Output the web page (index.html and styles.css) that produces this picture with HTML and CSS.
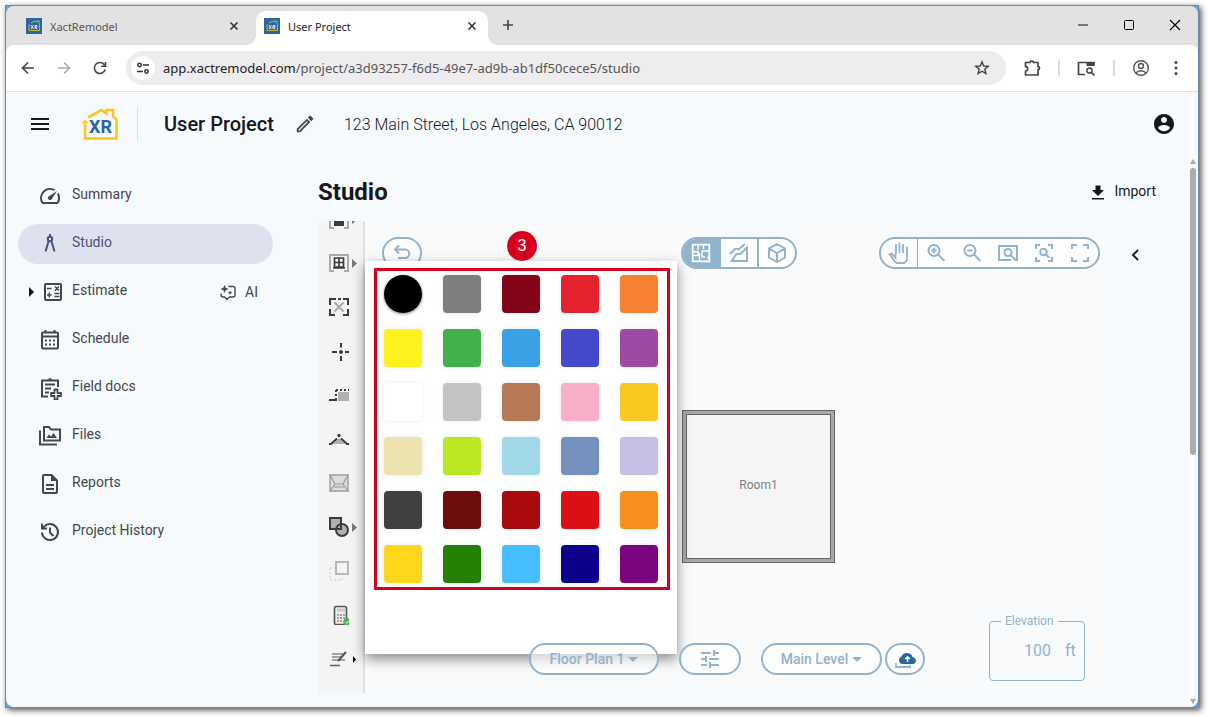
FILE: index.html
```
<!DOCTYPE html>
<html lang="en">

<head>
    <meta charset="UTF-8">
    <meta name="viewport" content="width=device-width, initial-scale=1.0">
    <title>User Project</title>
    <link rel="stylesheet" href="styles.css">
</head>

<body>
    <div class="window">
        <div class="chrome">
            <div class="tabs">
                <div class="tab">
                    <svg class="favicon" viewBox="0 0 16 16"><rect width="16" height="16" fill="#2a66a3"/><path d="M3 12.500V7.500M2.500 7H4M5 5l4-2 2 1V3h2v3l.5.5v6H3" fill="none" stroke="#c9b437"/><path d="M5 7l2.500 4M7.500 7L5 11M9 11V7.500h2v1.800H9l2.200 1.700" fill="none" stroke="#dfe9f3"/></svg>
                    <span class="tab-title">XactRemodel</span>
                    <button class="tab-close" aria-label="Close tab"><svg width="10" height="10" viewBox="0 0 10 10"><path d="M1.500 1.500l7 7M8.500 1.500l-7 7" stroke="currentColor" stroke-width="1.600"/></svg></button>
                </div>
                <div class="tab active">
                    <svg class="favicon" viewBox="0 0 16 16"><rect width="16" height="16" fill="#2a66a3"/><path d="M3 12.500V7.500M2.500 7H4M5 5l4-2 2 1V3h2v3l.5.5v6H3" fill="none" stroke="#c9b437"/><path d="M5 7l2.500 4M7.500 7L5 11M9 11V7.500h2v1.800H9l2.200 1.700" fill="none" stroke="#dfe9f3"/></svg>
                    <span class="tab-title">User Project</span>
                    <button class="tab-close" aria-label="Close tab"><svg width="10" height="10" viewBox="0 0 10 10"><path d="M1.500 1.500l7 7M8.500 1.500l-7 7" stroke="currentColor" stroke-width="1.600"/></svg></button>
                </div>
                <button class="new-tab" aria-label="New tab"><svg width="12" height="12" viewBox="0 0 12 12"><path d="M6 1v10M1 6h10" stroke="#444" stroke-width="1.600"/></svg></button>
                <div class="win-btns">
                    <button aria-label="Minimize"><svg width="12" height="12" viewBox="0 0 12 12"><path d="M1 6h10" stroke="#777" stroke-width="2"/></svg></button>
                    <button aria-label="Maximize"><svg width="12" height="12" viewBox="0 0 12 12"><rect x="1.500" y="1.500" width="9" height="9" rx="1" fill="none" stroke="#000"/></svg></button>
                    <button aria-label="Close"><svg width="12" height="12" viewBox="0 0 12 12"><path d="M1 1l10 10M11 1L1 11" stroke="#000" stroke-width="1.200"/></svg></button>
                </div>
            </div>
            <div class="toolbar">
                <button class="nav-btn" aria-label="Back"><svg width="16" height="16" viewBox="0 0 16 16"><path d="M14 8H3M8 2.500L2.500 8 8 13.500" fill="none" stroke="#444" stroke-width="1.600"/></svg></button>
                <button class="nav-btn" aria-label="Forward"><svg width="16" height="16" viewBox="0 0 16 16"><path d="M2 8h11M8 2.500L13.500 8 8 13.500" fill="none" stroke="#aaa" stroke-width="1.600"/></svg></button>
                <button class="nav-btn" aria-label="Reload"><svg width="16" height="16" viewBox="0 0 16 16"><path d="M13.200 9.500A5.500 5.500 0 1 1 12.500 5M13.500 2v4.200H9.300" fill="none" stroke="#444" stroke-width="1.600"/></svg></button>
                <div class="omnibox">
                    <button class="site-info" aria-label="Site information"><svg width="14" height="14" viewBox="0 0 14 14" fill="none" stroke="#333" stroke-width="1.500"><circle cx="3.500" cy="4" r="1.700"/><path d="M7 4h6M1 10.500h6"/><circle cx="10.500" cy="10.500" r="1.700"/></svg></button>
                    <div class="url"><b>app.xactremodel.com</b>/project/a3d93257-f6d5-49e7-ad9b-ab1df50cece5/studio</div>
                    <button class="star" aria-label="Bookmark"><svg width="16" height="16" viewBox="0 0 16 16"><path d="M8 1.800l1.700 4.200 4.500.3-3.400 2.900 1.100 4.400L8 11.200l-3.900 2.400 1.100-4.400L1.800 6.300l4.500-.3z" fill="none" stroke="#444" stroke-width="1.400"/></svg></button>
                </div>
                <div class="chrome-icons">
                    <button aria-label="Extensions"><svg width="18" height="18" viewBox="0 0 18 18"><path d="M2.500 3.500h4.500a1.800 1.400 0 0 1 3.600 0H15v4.200a1.500 1.500 0 0 1 0 3v5.300H2.500v-4a2.200 2.200 0 0 0 0-4.400z" fill="none" stroke="#444" stroke-width="1.700" stroke-linejoin="round"/></svg></button>
                    <i></i>
                    <button aria-label="Search tabs"><svg width="18" height="18" viewBox="0 0 18 18"><path d="M8 15.500H1.500v-12H17M16.800 7V3" fill="none" stroke="#444" stroke-width="1.700"/><path d="M9.500 3h8v4h-8z" fill="#444"/><circle cx="12.500" cy="11.500" r="2.600" fill="none" stroke="#444" stroke-width="1.500"/><path d="M14.500 13.500l3 3" stroke="#444" stroke-width="1.600"/></svg></button>
                    <i></i>
                    <button aria-label="Profile"><svg width="18" height="18" viewBox="0 0 18 18" fill="none" stroke="#555" stroke-width="1.400"><circle cx="9" cy="9" r="7.300"/><circle cx="9" cy="7" r="2.500"/><path d="M4 14c2.500-3 7.500-3 10 0"/></svg></button>
                    <button aria-label="Menu"><svg width="18" height="18" viewBox="0 0 18 18" fill="#444"><circle cx="9" cy="3.500" r="1.500"/><circle cx="9" cy="9" r="1.500"/><circle cx="9" cy="14.500" r="1.500"/></svg></button>
                </div>
            </div>
        </div>

        <div class="app">
            <header class="header">
                <button class="icon-btn" aria-label="Open menu"><svg width="24" height="24" viewBox="0 0 24 24" fill="#16181d"><path d="M3 18h18v-2H3v2zm0-5h18v-2H3v2zm0-7v2h18V6H3z"/></svg></button>
                <div class="logo">
                    <svg width="38" height="34" viewBox="0 0 38 34" fill="none" stroke="#fbc618" stroke-width="2.600"><path d="M4 17v14.500h31.500V12.500L32 9.500V3h-6.500v3.500L20.500 3 7 10.500"/><path d="M.5 16.500L4 12.500l3.500 4z" fill="#fbc618" stroke="none"/></svg>
                    <span>XR</span>
                </div>
                <h1>User Project</h1>
                <button class="edit" aria-label="Edit project"><svg width="22" height="22" viewBox="0 0 24 24" fill="#44474c"><path d="M14.060 9.020l.92.92L5.920 19H5v-.92l9.060-9.060M17.660 3c-.25 0-.51.1-.7.29l-1.830 1.830 3.750 3.750 1.830-1.830c.39-.39.39-1.020 0-1.410l-2.340-2.340c-.2-.2-.45-.29-.71-.29zm-3.600 3.190L3 17.250V21h3.750L17.810 9.940l-3.750-3.750z"/></svg></button>
                <span class="address">123 Main Street, Los Angeles, CA 90012</span>
                <button class="account" aria-label="Account"><svg width="24" height="24" viewBox="0 0 24 24" fill="#16181d"><path d="M12 2C6.480 2 2 6.480 2 12s4.480 10 10 10 10-4.480 10-10S17.520 2 12 2zm0 3c1.660 0 3 1.340 3 3s-1.340 3-3 3-3-1.340-3-3 1.340-3 3-3zm0 14.200c-2.500 0-4.710-1.280-6-3.220.03-1.990 4-3.080 6-3.080 1.990 0 5.970 1.090 6 3.080-1.290 1.940-3.500 3.220-6 3.220z"/></svg></button>
            </header>

            <div class="body">
                <nav class="sidebar">
                    <a href="#"><svg viewBox="0 0 24 24" fill="currentColor"><path d="M20.380 8.570l-1.230 1.850a8 8 0 0 1-.22 7.580H5.070A8 8 0 0 1 15.580 6.850l1.850-1.230A10 10 0 0 0 3.350 19a2 2 0 0 0 1.720 1h13.850a2 2 0 0 0 1.740-1 10 10 0 0 0-.27-10.440zm-9.790 6.840a2 2 0 0 0 2.830 0l5.660-8.490-8.490 5.660a2 2 0 0 0 0 2.830z"/></svg><span>Summary</span></a>
                    <a href="#" class="current"><svg viewBox="0 0 24 24" fill="none" stroke="currentColor" stroke-width="2"><path d="M12 2v3M10.500 9.500L7.500 19.500M13.500 9.500l3 10"/><circle cx="12" cy="7" r="2.200"/></svg><span>Studio</span></a>
                    <a href="#" class="expandable"><svg class="caret" viewBox="0 0 12 24" fill="#16181d"><path d="M3 7l5 5-5 5z"/></svg><svg viewBox="0 0 24 24" fill="none" stroke="currentColor" stroke-width="2"><rect x="7" y="4" width="16" height="16" rx="1"/><path d="M9 8.500h4.500M16.500 13.500h5M16.500 16.500h5M11.300 12.500v5M9 15h4.600M17 6.500l4 4M21 6.500l-4 4" stroke-width="1.500"/></svg><span>Estimate</span>
                        <em><svg viewBox="0 0 18 18" fill="none" stroke="currentColor" stroke-width="1.400"><path d="M9.500 3.500H14a2 2 0 0 1 2 2v6.500a2 2 0 0 1-2 2h-3.500L8 16.500 5.500 14H4a2 2 0 0 1-2-2v-1.500"/><path d="M5.500 2l1.200 2.800L9.500 6 6.700 7.200 5.500 10 4.300 7.200 1.500 6l2.800-1.200zM11 7.500l.7 1.600 1.600.7-1.600.7-.7 1.600-.7-1.600-1.600-.7 1.600-.7z" fill="currentColor" stroke="none"/></svg>AI</em></a>
                    <a href="#"><svg viewBox="0 0 24 24" fill="none" stroke="currentColor" stroke-width="2"><rect x="4" y="4.500" width="16" height="16" rx="1"/><path d="M4 8.500h16M7.500 2v3M16.500 2v3"/><path d="M7 12.500h10M7 16.500h10" stroke-dasharray="2 2"/></svg><span>Schedule</span></a>
                    <a href="#"><svg viewBox="0 0 24 24" fill="none" stroke="currentColor" stroke-width="2"><path d="M10 20.500H4V4.500h16V11M7 8.500h10M7 12.500h6M7 16.500h4"/><path d="M9 5V3.500h1.500a1.500 1.500 0 0 1 3 0H15V5z" fill="currentColor" stroke="none"/><path d="M16.500 13.500h3v3.500H23v3h-3.500v3.500h-3V20H13v-3h3.500z" fill="#f6fafd" stroke-width="1.800" stroke-linejoin="round"/></svg><span>Field docs</span></a>
                    <a href="#"><svg viewBox="0 0 24 24" fill="none" stroke="currentColor" stroke-width="2"><path d="M6 3h5l2 2.500h9v11H6zM2 6.500v14h17"/><path d="M8.500 14l2.500-3.500 2 2L15.500 9l3.500 5z" fill="currentColor" stroke="none"/></svg><span>Files</span></a>
                    <a href="#"><svg viewBox="0 0 24 24" fill="currentColor"><path d="M8 16h8v2H8zm0-4h8v2H8zm6-10H6c-1.100 0-2 .9-2 2v16c0 1.100.89 2 1.990 2H18c1.100 0 2-.9 2-2V8l-6-6zm4 18H6V4h7v5h5v11z"/></svg><span>Reports</span></a>
                    <a href="#"><svg viewBox="0 0 24 24" fill="none" stroke="currentColor" stroke-width="2"><path d="M4 12.500a8 8 0 1 0 2-5.800L4.500 8.500M4 3.500v5h5M12 7.500v5l3.500 3.500"/></svg><span>Project History</span></a>
                </nav>

                <main class="main">
                    <div class="title-row">
                        <h2>Studio</h2>
                        <button class="import"><svg width="16" height="18" viewBox="0 0 16 18" fill="#16181d"><path d="M5.500 3.500h5v4.500H14l-6 6-6-6h3.500zM2 16h12v1.500H2z"/></svg>Import</button>
                    </div>

                    <div class="studio">
                        <div class="tools">
                            <button aria-label="Door"><svg viewBox="0 0 20 20"><path d="M5 1H1v18h4M15 1h4v18h-4" fill="none" stroke="#aaa" stroke-width="2"/><path d="M5 4h10v13H5z" fill="#3c3c3c"/></svg><svg class="more" viewBox="0 0 5 9"><path d="M0 0l5 4.500L0 9z" fill="#777"/></svg></button>
                            <button aria-label="Window"><svg viewBox="0 0 20 20"><path d="M5 2H1v16h4M15 2h4v16h-4M1 2h18" fill="none" stroke="#aaa" stroke-width="2"/><path d="M5.500 5h9v9h-9zM4 15h12M5.500 9.500h9M10 5v10" fill="none" stroke="#3c3c3c" stroke-width="1.700"/></svg><svg class="more" viewBox="0 0 5 9"><path d="M0 0l5 4.500L0 9z" fill="#777"/></svg></button>
                            <button aria-label="Missing wall"><svg viewBox="0 0 20 20"><path d="M1 8V2h6M9 2h3M14 2h5v6M19 12v6h-5M6 18H1v-6" fill="none" stroke="#3c3c3c" stroke-width="2"/><path d="M5.500 5.500l9 9M14.500 5.500l-9 9" stroke="#aaa" stroke-width="2"/></svg></button>
                            <button aria-label="Point"><svg viewBox="0 0 20 20"><path d="M12 2v4.500M12 15v5M3 11h5M16 11h5" stroke="#3c3c3c" stroke-width="2"/><circle cx="12" cy="11" r="2" fill="#3c3c3c"/></svg></button>
                            <button aria-label="Offset"><svg viewBox="0 0 20 20"><path d="M9 7h11v9H9z" fill="#b0b0b0"/><path d="M7 5h13M7 5v9" stroke="#3c3c3c" stroke-width="2" stroke-dasharray="2 2"/><path d="M0 15h8" stroke="#3c3c3c" stroke-width="2"/></svg></button>
                            <button aria-label="Roof"><svg viewBox="0 0 20 20"><path d="M4 15l6-6 6 6z" fill="#b0b0b0"/><path d="M0 15h2l6-5.500M20 15h-2l-6-5.500" fill="none" stroke="#3c3c3c" stroke-width="2"/><circle cx="10" cy="6.500" r="1.700" fill="#3c3c3c"/></svg></button>
                            <button aria-label="Ceiling"><svg viewBox="0 0 20 20" fill="none" stroke="#b0b0b0" stroke-width="1.800"><path d="M1 2h18v16H1z" fill="#ddd"/><path d="M1 2l5 9-5 7M19 2l-5 9 5 7M6 11h8M5 14h10" stroke="#999" stroke-width="1.200"/></svg></button>
                            <button aria-label="Shapes"><svg viewBox="0 0 20 20" fill="#b0b0b0" stroke="#3c3c3c" stroke-width="2"><path d="M1 1h11v11H1z"/><circle cx="13" cy="13" r="6"/><path d="M12 7v5H7" fill="none"/></svg><svg class="more" viewBox="0 0 5 9"><path d="M0 0l5 4.500L0 9z" fill="#777"/></svg></button>
                            <button aria-label="Copy"><svg viewBox="0 0 20 20" fill="none" stroke-width="2"><path d="M1 7h5M1 7v12h12v-4" stroke="#ddd" stroke-dasharray="2 2"/><path d="M7 1h12v12H7z" stroke="#b8b8b8"/></svg></button>
                            <button aria-label="Calculate"><svg viewBox="0 0 20 20"><rect x="5.500" y="1.500" width="12" height="18" rx="1.500" fill="#eee" stroke="#555" stroke-width="1.600"/><path d="M8 5h8" stroke="#ccc" stroke-width="3"/><path d="M8 10h8M8 13h8M8 16h6" stroke="#888" stroke-width="1.600" stroke-dasharray="2 1"/><circle cx="18" cy="17" r="3.800" fill="#4caf50"/><path d="M16.300 17l1.200 1.300 2.200-2.500" fill="none" stroke="#fff"/></svg></button>
                            <button aria-label="Annotate"><svg viewBox="0 0 20 20"><path d="M3 5h12M3 8h9M3 11h13" stroke="#888" stroke-width="1.400"/><path d="M17 3L9 12" stroke="#555" stroke-width="2"/><path d="M1 16.500h10" stroke="#666" stroke-width="1.600"/></svg><svg class="more" viewBox="0 0 5 9"><path d="M1 1l3 3.500L1 8z" fill="#000"/></svg></button>
                        </div>

                        <div class="stage">
                            <div class="top-bar">
                                <div class="undo-wrap"><button class="pill round" aria-label="Undo"><svg width="20" height="20" viewBox="0 0 20 20" fill="none" stroke="currentColor" stroke-width="2"><path d="M7 2.500L3 6.500l4 4M3 6.500h10a4.200 4.200 0 0 1 0 8.500H6"/></svg></button></div>
                                <div class="pill views">
                                    <button class="on" aria-label="Plan view"><svg width="20" height="20" viewBox="0 0 20 20" fill="none" stroke="currentColor" stroke-width="1.400"><path d="M1.700 1.700h16.600v16.600H1.700z" stroke-width="1.800"/><path d="M7 2v5M2 8.700h5V12M8.500 10v8M8.500 12.500H2M11 14V8h7M12.500 2v4M11 14h3M16 14.500h2"/></svg></button>
                                    <button aria-label="Elevation view"><svg width="20" height="20" viewBox="0 0 20 20" fill="none" stroke="currentColor" stroke-width="2"><path d="M1 11l5-5h4l6-5M2.500 18l5-7h4l6.500-6.500V18z"/></svg></button>
                                    <button aria-label="3D view"><svg width="20" height="20" viewBox="0 0 20 20" fill="none" stroke="currentColor" stroke-width="2"><path d="M10 1l8 4.500v9L10 19l-8-4.500v-9zM2 5.500l8 4.500 8-4.500M10 10v9"/></svg></button>
                                </div>
                                <div class="pill zooms">
                                    <button aria-label="Pan"><svg width="22" height="24" viewBox="0 0 22 24" fill="none" stroke="currentColor" stroke-width="1.800"><path d="M8 13V3M11.500 12V1.500M15 12V3M7.500 12v5l-4-4.500-2 .8 5.500 7.200 2 1.500h7.500l2.500-2.500V5.500"/></svg></button>
                                    <button aria-label="Zoom in"><svg width="20" height="20" viewBox="0 0 20 20" fill="none" stroke="currentColor" stroke-width="2"><circle cx="8" cy="7.500" r="5.500"/><path d="M12 11.500l6.500 6.500M8 4.800v5.400M5.300 7.500h5.400"/></svg></button>
                                    <button aria-label="Zoom out"><svg width="20" height="20" viewBox="0 0 20 20" fill="none" stroke="currentColor" stroke-width="2"><circle cx="8" cy="7.500" r="5.500"/><path d="M12 11.500l6.500 6.500M5.300 7.500h5.400"/></svg></button>
                                    <button aria-label="Zoom to fit"><svg width="20" height="20" viewBox="0 0 20 20" fill="none" stroke="currentColor" stroke-width="2"><path d="M13 17H1V3h18v14h-2"/><circle cx="10" cy="9.500" r="3.500"/><path d="M12.500 12l5 5"/></svg></button>
                                    <button aria-label="Zoom to selection"><svg width="20" height="20" viewBox="0 0 20 20" fill="none" stroke="currentColor" stroke-width="2"><path d="M2 6V2h4M14 2h4v4M18 14v4h-4M6 18H2v-4"/><circle cx="9.500" cy="9" r="3.300"/><path d="M12 11.500l3 3"/></svg></button>
                                    <button aria-label="Full screen"><svg width="20" height="20" viewBox="0 0 20 20" fill="none" stroke="currentColor" stroke-width="2"><path d="M2 6V2h5M13 2h5v4M18 14v4h-5M7 18H2v-4"/></svg></button>
                                </div>
                            </div>

                            <div class="room"><span>Room1</span></div>

                            <div class="palette">
                                <div class="swatches"></div>
                            </div>
                            <span class="step">3</span>

                            <div class="bottom-bar">
                                <div class="plan-controls">
                                    <button class="pill plan">Floor Plan 1<svg width="10" height="6" viewBox="0 0 10 6"><path d="M0 1h10L5 6z" fill="currentColor"/></svg></button>
                                    <button class="pill tune" aria-label="Settings"><svg width="24" height="24" viewBox="0 0 24 24" fill="currentColor"><path d="M3 17v2h6v-2H3zM3 5v2h10V5H3zm10 16v-2h8v-2h-8v-2h-2v6h2zM7 9v2H3v2h4v2h2V9H7zm14 4v-2H11v2h10zm-6-4h2V7h4V5h-4V3h-2v6z"/></svg></button>
                                    <div class="level-group">
                                        <button class="pill level">Main Level<svg width="10" height="6" viewBox="0 0 10 6"><path d="M0 1h10L5 6z" fill="currentColor"/></svg></button>
                                        <button class="pill round" aria-label="Upload"><svg width="24" height="20" viewBox="0 0 24 20"><path d="M3 14v4h14v-2" fill="none" stroke="currentColor" stroke-width="1.800"/><path d="M9 15a4 4 0 0 1-.5-7.600 6 6 0 0 1 11.200.8A3.500 3.500 0 0 1 20.500 15z" fill="#26689d"/><path d="M14.500 13V8M12.300 10l2.200-2.200 2.200 2.200" fill="none" stroke="#fff" stroke-width="1.600"/></svg></button>
                                    </div>
                                </div>
                                <fieldset class="elevation">
                                    <legend><label for="elevation">Elevation</label></legend>
                                    <input id="elevation" type="text" value="100"><span>ft</span>
                                </fieldset>
                            </div>
                        </div>

                        <div class="side-panel">
                            <button aria-label="Expand panel"><svg width="12" height="14" viewBox="0 0 12 14"><path d="M9 2L4 7l5 5" fill="none" stroke="#222" stroke-width="2"/></svg></button>
                        </div>
                    </div>
                </main>

                <div class="scrollbar">
                    <svg width="6" height="5" viewBox="0 0 6 5"><path d="M0 5l3-5 3 5z" fill="#a9adb0"/></svg>
                    <div class="thumb"></div>
                    <svg width="6" height="5" viewBox="0 0 6 5"><path d="M0 0h6L3 5z" fill="#a9adb0"/></svg>
                </div>
            </div>
        </div>
    </div>

    <script>
        const colors = [
            "#000000", "#7f7f7f", "#820519", "#e4232e", "#f78132",
            "#fdf21b", "#43b14b", "#3ba1e7", "#4549cc", "#9e4aa2",
            "#ffffff", "#c3c3c3", "#b57957", "#f9aec9", "#f9c91f",
            "#ede3b0", "#b9e720", "#a1d8e8", "#7391bc", "#c7bee6",
            "#404040", "#6c0e0c", "#a90a0e", "#db1017", "#f88e1c",
            "#fcd71b", "#248003", "#45bfff", "#0a0089", "#7a057f"
        ];

        const swatches = document.querySelector(".swatches");

        colors.forEach((color, i) => {
            const btn = document.createElement("button");
            btn.className = i == 0 ? "swatch selected" : "swatch";
            btn.style.backgroundColor = color;
            btn.setAttribute("aria-label", color);
            swatches.appendChild(btn);
        });

        swatches.addEventListener("click", e => {
            if (!e.target.classList.contains("swatch")) return;
            swatches.querySelector(".selected").classList.remove("selected");
            e.target.classList.add("selected");
        });
    </script>
</body>

</html>
```
FILE: styles.css
```
* {
    box-sizing: border-box;
}

body {
    margin: 0;
    padding: 5px 9px 9px 5px;
    height: 100vh;
    min-height: 700px;
    background-color: #fff;
    font-family: Roboto, "Liberation Sans", sans-serif;
    font-size: 14px;
    color: #44474c;
}

button {
    border: 0;
    padding: 0;
    background: none;
    font: inherit;
    color: inherit;
    cursor: pointer;
    display: flex;
    align-items: center;
    justify-content: center;
}

svg {
    display: block;
    flex: none;
}

h1, h2 {
    margin: 0;
    color: #16181d;
}

.window {
    height: 100%;
    display: flex;
    flex-direction: column;
    border: 1px solid #6a8ca8;
    background-color: #6fa3cc;
    box-shadow: 2px 2px 6px rgba(0, 0, 0, 0.7);
}

/* browser chrome */

.chrome {
    background-color: #e2e2e2;
    border-radius: 8px 8px 0 0;
    font-family: "Noto Sans", "Open Sans", sans-serif;
}

.tabs {
    display: flex;
    align-items: flex-end;
    gap: 6px;
    height: 39px;
    padding-left: 12px;
}

.tab {
    position: relative;
    display: flex;
    align-items: center;
    width: 232px;
    height: 34px;
    padding: 0 11px 4px 8px;
    font-size: 11px;
    color: #555;
}

.tab.active {
    background-color: #fff;
    border-radius: 10px 10px 0 0;
    color: #222;
}

.tab.active::before,
.tab.active::after {
    content: "";
    position: absolute;
    bottom: 0;
    width: 10px;
    height: 10px;
}

.tab.active::before {
    left: -10px;
    background: radial-gradient(circle at 0 0, transparent 10px, #fff 10px);
}

.tab.active::after {
    right: -10px;
    background: radial-gradient(circle at 100% 0, transparent 10px, #fff 10px);
}

.favicon {
    width: 16px;
    height: 16px;
    margin-right: 8px;
}

.tab-close {
    margin-left: auto;
    color: #333;
}

.new-tab {
    width: 28px;
    height: 34px;
    padding-bottom: 6px;
}

.win-btns {
    display: flex;
    align-self: flex-start;
    margin-left: auto;
}

.win-btns button {
    width: 46px;
    height: 38px;
}

.toolbar {
    display: flex;
    align-items: center;
    height: 47px;
    padding-left: 4px;
    background-color: #fff;
    border-radius: 8px 8px 0 0;
    border-bottom: 1px solid #dcdfe1;
}

.nav-btn {
    width: 36px;
    height: 34px;
}

.omnibox {
    flex: 1;
    display: flex;
    align-items: center;
    height: 34px;
    margin-left: 8px;
    padding: 0 16px 0 5px;
    border-radius: 17px;
    background-color: #eeecee;
}

.site-info {
    width: 24px;
    height: 24px;
    border-radius: 50%;
    background-color: #fff;
}

.url {
    flex: 1;
    margin-left: 8px;
    font-size: 13px;
    color: #555;
}

.url b {
    font-weight: 400;
    color: #222;
}

.chrome-icons {
    display: flex;
    align-items: center;
    justify-content: space-between;
    width: 192px;
    padding: 0 13px 0 17px;
}

.chrome-icons i {
    width: 2px;
    height: 16px;
    background-color: #ddd;
}

/* application */

.app {
    flex: 1;
    display: flex;
    flex-direction: column;
    background-color: #f6fafd;
    border-radius: 0 0 8px 8px;
}

.header {
    display: flex;
    align-items: center;
    height: 64px;
    padding: 0 22px;
}

.logo {
    position: relative;
    margin-left: 29px;
    padding-right: 18px;
    border-right: 1px solid #dde1e5;
}

.logo span {
    position: absolute;
    left: 8px;
    top: 10px;
    font-size: 18px;
    line-height: 20px;
    font-weight: 700;
    color: #2a66a3;
}

.header h1 {
    margin-left: 26px;
    font-size: 20px;
    font-weight: 500;
}

.edit {
    margin: 0 28px 0 20px;
}

.address {
    font-size: 16px;
    font-weight: 300;
    color: #16181d;
}

.account {
    margin-left: auto;
}

.body {
    flex: 1;
    display: flex;
}

.sidebar {
    display: flex;
    flex-direction: column;
    gap: 8px;
    width: 312px;
    padding: 20px 45px 0 12px;
}

.sidebar a {
    display: flex;
    align-items: center;
    height: 40px;
    padding: 0 15px 0 20px;
    border-radius: 20px;
    color: #44474c;
    text-decoration: none;
}

.sidebar a > svg {
    width: 24px;
    height: 24px;
    margin-right: 10px;
}

.sidebar span {
    padding-bottom: 4px;
}

.sidebar .current {
    background-color: #dee2ee;
    color: #46527a;
}

.sidebar .expandable {
    padding-left: 8px;
}

.sidebar a > .caret {
    width: 12px;
    margin-right: 0;
}

.sidebar em {
    display: flex;
    align-items: center;
    gap: 8px;
    margin-left: auto;
    font-style: normal;
}

.sidebar em svg {
    width: 18px;
    height: 18px;
}

.main {
    flex: 1;
    display: flex;
    flex-direction: column;
    padding: 22px 27px 14px 0;
}

.title-row {
    display: flex;
    justify-content: space-between;
    align-items: center;
    margin-bottom: 15px;
}

.title-row h2 {
    font-size: 24px;
    line-height: 28px;
    font-weight: 700;
}

.import {
    gap: 8px;
    padding: 0 4px 2px 0;
    color: #16181d;
}

.studio {
    flex: 1;
    display: flex;
    border-radius: 0 8px 8px 0;
    background-color: #f9fafc;
}

.tools {
    width: 47px;
    overflow: hidden;
    background-color: #f4f4f4;
    border-right: 2px solid #dfe1e3;
}

.tools button {
    width: 100%;
    height: 44px;
    padding-left: 11px;
    justify-content: flex-start;
}

/* the list is scrolled so its first tool is half hidden */
.tools button:first-child {
    margin-top: -24px;
}

.tools svg {
    width: 20px;
    height: 20px;
}

.tools .more {
    width: 5px;
    height: 9px;
    margin-left: 3px;
}

.stage {
    position: relative;
    flex: 1;
    display: flex;
    flex-direction: column;
    justify-content: space-between;
}

.pill {
    display: flex;
    height: 32px;
    border: 2px solid #91b3cd;
    border-radius: 16px;
    background-color: rgba(255, 255, 255, 0.6);
    color: #91b3cd;
    overflow: hidden;
}

.pill.round {
    width: 40px;
}

.top-bar {
    display: grid;
    grid-template-columns: 1fr auto 1fr;
    padding: 16px 10px 0 12px;
}

.undo-wrap {
    padding-left: 5px;
}

.views button {
    width: 38px;
}

.views button + button {
    border-left: 2px solid #91b3cd;
}

.views .on {
    width: 36px;
    background-color: #91b3cd;
    color: #fff;
}

.zooms {
    justify-self: end;
}

.zooms button {
    width: 36px;
}

.zooms button:first-child {
    width: 37px;
    border-right: 1px solid #91b3cd;
}

.room {
    position: absolute;
    left: 317px;
    top: 189px;
    width: 153px;
    height: 153px;
    border: 1px solid #666;
    padding: 3px;
    background-color: #a8a8a8;
}

.room span {
    display: flex;
    align-items: center;
    justify-content: center;
    height: 100%;
    padding-bottom: 4px;
    border: 1px solid #666;
    background-color: #f5f5f5;
    font-size: 12px;
    color: #808080;
}

.palette {
    position: absolute;
    left: 0;
    top: 40px;
    width: 312px;
    height: 393px;
    padding: 7px 7px 0 9px;
    background-color: #fff;
    box-shadow: 0 5px 12px rgba(0, 0, 0, 0.45);
}

.swatches {
    display: grid;
    grid-template-columns: repeat(5, 38px);
    gap: 16px 21px;
    padding: 4px 7px;
    border: 3px solid #d6001c;
}

.swatch {
    height: 38px;
    border-radius: 4px;
    box-shadow: 0 0 4px rgba(0, 0, 0, 0.1);
}

.swatch.selected {
    border-radius: 50%;
    box-shadow: 0 1px 3px rgba(0, 0, 0, 0.5);
}

.step {
    position: absolute;
    left: 142px;
    top: 10px;
    width: 30px;
    height: 30px;
    border-radius: 50%;
    background-color: #d6001c;
    color: #fff;
    font-family: "Liberation Sans", Arial, sans-serif;
    font-size: 16px;
    line-height: 30px;
    text-align: center;
}

.bottom-bar {
    position: relative;
    display: flex;
    align-items: flex-end;
    justify-content: flex-end;
    gap: 64px;
    padding: 0 25px 12px 0;
}

.plan-controls {
    display: flex;
    gap: 20px;
    padding-bottom: 6px;
    font-weight: 500;
}

.bottom-bar .pill {
    gap: 4px;
}

.plan {
    width: 130px;
}

.tune {
    width: 62px;
}

.level-group {
    display: flex;
    gap: 3px;
}

.level {
    width: 121px;
}

.elevation {
    display: flex;
    align-items: center;
    width: 96px;
    height: 67px;
    margin: 0;
    padding: 0 8px 7px;
    border: 1px solid #91b3cd;
    border-radius: 4px;
    font-size: 16px;
    color: #91b3cd;
}

.elevation legend {
    margin-left: 3px;
    padding: 0 4px;
    font-size: 12px;
    line-height: 14px;
}

.elevation input {
    width: 53px;
    margin-right: 14px;
    padding: 0;
    border: 0;
    background: none;
    font: inherit;
    color: inherit;
    text-align: right;
}

.side-panel {
    width: 50px;
    padding-top: 24px;
    border-radius: 0 8px 8px 0;
    background-color: #f6fafd;
}

.side-panel button {
    width: 100%;
    height: 20px;
}

.scrollbar {
    display: flex;
    flex-direction: column;
    align-items: center;
    gap: 4px;
    width: 11px;
    padding: 3px 0;
}

.thumb {
    width: 6px;
    height: 287px;
    margin-bottom: auto;
    border-radius: 3px;
    background-color: #a9adb0;
}
```
